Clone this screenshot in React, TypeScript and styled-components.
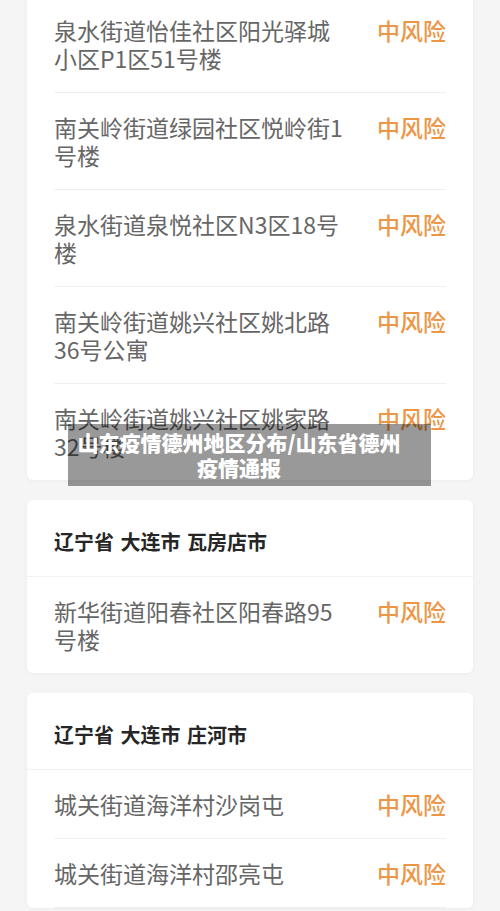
import React from 'react'
import styled, { createGlobalStyle } from 'styled-components'

const GlobalStyle = createGlobalStyle`
  html, body {
    margin: 0;
    padding: 0;
    background: #f5f5f5;
  }
  body {
    font-family: "Noto Sans CJK SC", "Noto Sans", sans-serif;
    -webkit-font-smoothing: antialiased;
  }
`

const Page = styled.div`
  position: relative;
  display: flex;
  flex-direction: column;
  gap: 20px;
  padding: 0 27px 40px;
  margin-top: -4px;
`

const Card = styled.div`
  background: #fff;
  border-radius: 6px;
  box-shadow: 0 1px 4px rgba(0, 0, 0, 0.04);
  display: flex;
  flex-direction: column;
`

const CardHeader = styled.div`
  padding: 28px 27px 20px;
  font-size: 20px;
  line-height: 28px;
  font-weight: 700;
  color: #262626;
  border-bottom: 1px solid #f2f2f2;
  word-spacing: 2px;
`

const Row = styled.div<{ $divider: boolean }>`
  margin: 0 27px;
  padding: 20px 0;
  display: flex;
  justify-content: space-between;
  align-items: flex-start;
  border-bottom: ${(p) => (p.$divider ? '1px solid #efefef' : 'none')};
`

const Place = styled.div`
  width: 294px;
  font-size: 23px;
  line-height: 28px;
  color: #666;
`

const Risk = styled.div`
  font-size: 23px;
  line-height: 28px;
  font-weight: 500;
  color: #ec9646;
  white-space: nowrap;
`

const Caption = styled.div`
  position: absolute;
  top: 428px;
  left: 68px;
  width: 363px;
  box-sizing: border-box;
  padding: 6px 29px 6px 8px;
  background: rgba(0, 0, 0, 0.4);
  color: #fff;
  font-size: 21px;
  line-height: 25px;
  font-weight: 900;
  text-align: center;
`

type Group = {
  title?: string
  places: string[]
  continues?: boolean
}

const groups: Group[] = [
  {
    places: [
      '泉水街道怡佳社区阳光驿城小区P1区51号楼',
      '南关岭街道绿园社区悦岭街1号楼',
      '泉水街道泉悦社区N3区18号楼',
      '南关岭街道姚兴社区姚北路36号公寓',
      '南关岭街道姚兴社区姚家路32号楼',
    ],
  },
  {
    title: '辽宁省 大连市 瓦房店市',
    places: ['新华街道阳春社区阳春路95号楼'],
  },
  {
    title: '辽宁省 大连市 庄河市',
    places: ['城关街道海洋村沙岗屯', '城关街道海洋村邵亮屯'],
    continues: true,
  },
]

export default function App() {
  return (
    <>
      <GlobalStyle />
      <Page>
        {groups.map((group, i) => (
          <Card key={i}>
            {group.title && <CardHeader>{group.title}</CardHeader>}
            {group.places.map((place, j) => (
              <Row key={place} $divider={group.continues || j < group.places.length - 1}>
                <Place>{place}</Place>
                <Risk>中风险</Risk>
              </Row>
            ))}
          </Card>
        ))}
        <Caption>山东疫情德州地区分布/山东省德州疫情通报</Caption>
      </Page>
    </>
  )
}
